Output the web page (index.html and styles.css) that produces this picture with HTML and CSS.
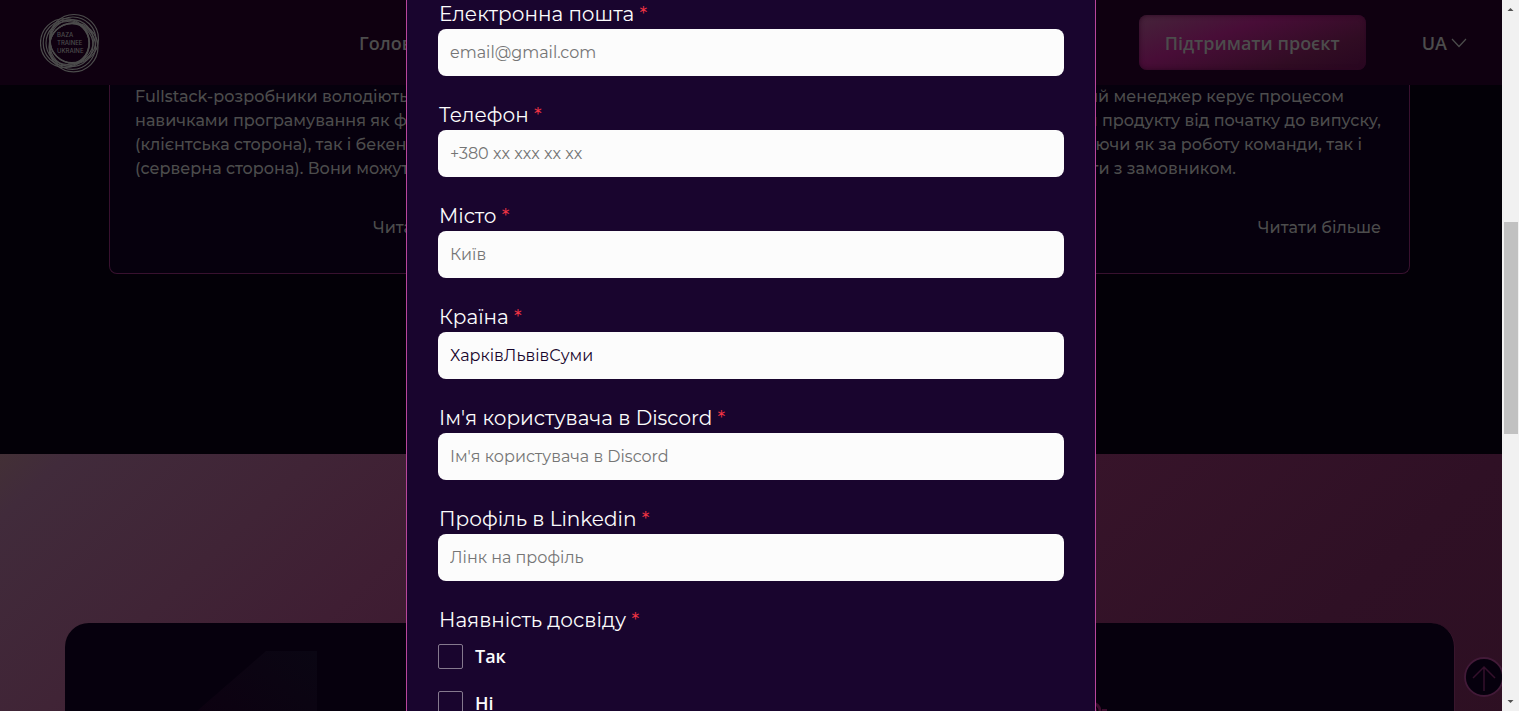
FILE: index.html
```html
<!DOCTYPE html>
<html lang="uk">
<head>
<meta charset="utf-8">
<title>Baza Trainee Ukraine</title>
<link rel="stylesheet" href="styles.css">
</head>
<body>
<div class="page">
  <header class="header">
    <a class="logo" href="#" aria-label="Baza Trainee Ukraine">
      <svg width="60" height="60" viewBox="-30 -30 60 60">
        <g fill="none" stroke="currentColor" stroke-width="1.2">
          <circle r="24.5" cx="-5" cy="0"/><circle r="23" cx="-3.800" cy="0"/><circle r="21.500" cx="-2.500" cy="0"/>
          <circle r="24.5" cx="4" cy="-4"/><circle r="23" cx="3" cy="-3"/><circle r="21.500" cx="1.800" cy="-1.900"/>
          <circle r="24.5" cx="3.500" cy="4.300"/><circle r="23" cx="2.500" cy="3.300"/><circle r="21.500" cx="1.500" cy="2.100"/>
        </g>
        <g class="logo-text"><text x="-13" y="-6">BAZA</text><text x="-13" y="2">TRAINEE</text><text x="-13" y="10">UKRAINE</text></g>
      </svg>
    </a>
    <nav class="nav"><a href="#">Головна</a></nav>
    <button class="support" type="button">Підтримати проєкт</button>
    <button class="lang" type="button">UA
      <svg width="16" height="10" viewBox="0 0 16 10"><path d="M1 1l7 7.500 7-7.500" fill="none" stroke="currentColor" stroke-width="1.200"/></svg>
    </button>
  </header>

  <main>
    <section class="cards">
      <article class="card">
        <p>Fullstack-розробники володіють<br>навичками програмування як фронт<br>(клієнтська сторона), так і бекенд<br>(серверна сторона). Вони можуть</p>
        <a href="#">Читати більше</a>
      </article>
      <article class="card"></article>
      <article class="card">
        <p>Проєктний менеджер керує процесом<br>розробки продукту від початку до випуску,<br>відповідаючи як за роботу команди, так і<br>працювати з замовником.</p>
        <a href="#">Читати більше</a>
      </article>
    </section>

    <section class="steps">
      <div class="panel">
        <svg class="numeral" width="120" height="90" viewBox="0 0 120 90">
          <defs><linearGradient id="num" x1="0" y1="1" x2="1" y2="0"><stop offset="0" stop-color="#0d0010"/><stop offset="1" stop-color="#0a0613"/></linearGradient></defs>
          <path d="M69 0h51v90H0V60z" fill="url(#num)"/>
        </svg>
        <svg class="ring" width="28" height="28" viewBox="0 0 28 28"><g fill="none" stroke="#3d0c2e"><circle cx="10" cy="10" r="8" stroke-width="3"/><circle cx="10" cy="10" r="4" stroke-width="2"/><path d="M21 12v-3h4" stroke-width="2"/></g></svg>
      </div>
    </section>
  </main>

  <button class="to-top" type="button" aria-label="Нагору">
    <svg width="40" height="40" viewBox="0 0 40 40" fill="none"><circle cx="20" cy="20" r="19" fill="#06000d" stroke="#421a38" stroke-width="1.800"/><path d="M20 34V10M9 21l11-11 11 11" stroke="#35102c" stroke-width="1.500"/></svg>
  </button>

  <div class="modal" role="dialog" aria-label="Анкета">
    <form class="form">
      <div class="field"><label for="email">Електронна пошта <span>*</span></label><input id="email" type="email" placeholder="email@gmail.com"></div>
      <div class="field"><label for="phone">Телефон <span>*</span></label><input id="phone" type="tel" placeholder="+380 xx xxx xx xx"></div>
      <div class="field"><label for="city">Місто <span>*</span></label><input id="city" type="text" placeholder="Київ"></div>
      <div class="field"><label for="country">Країна <span>*</span></label><input id="country" type="text" value="ХарківЛьвівСуми"></div>
      <div class="field"><label for="discord">Ім'я користувача в Discord <span>*</span></label><input id="discord" type="text" placeholder="Ім'я користувача в Discord"></div>
      <div class="field"><label for="linkedin">Профіль в Linkedin <span>*</span></label><input id="linkedin" type="url" placeholder="Лінк на профіль"></div>
      <fieldset class="experience">
        <legend>Наявність досвіду <span>*</span></legend>
        <label class="option"><input type="checkbox">Так</label>
        <label class="option"><input type="checkbox">Ні</label>
      </fieldset>
    </form>
  </div>
</div>

<div class="scrollbar" aria-hidden="true">
  <svg width="17" height="17" viewBox="0 0 17 17"><path d="M5.500 11h6L8.500 8z" fill="#505050"/></svg>
  <div class="thumb"></div>
  <svg class="down" width="17" height="17" viewBox="0 0 17 17"><path d="M5.500 6h6L8.500 9z" fill="#505050"/></svg>
</div>
</body>
</html>
```

FILE: styles.css
```css
* { box-sizing: border-box; }

body {
  margin: 0;
  height: 100vh;
  overflow: hidden;
  display: flex;
  background: #030007;
  font-family: Montserrat, Inter, sans-serif;
  font-size: 16px;
  font-weight: 500;
}

a { color: inherit; text-decoration: none; }
button { font: inherit; color: inherit; border: 0; background: none; padding: 0; }

.page {
  position: relative;
  flex: 1;
  min-width: 0;
  display: flex;
  flex-direction: column;
  overflow: hidden;
  color: #4c4c4c;
}

.header {
  flex: none;
  height: 85px;
  padding: 0 35px 0 40px;
  display: flex;
  align-items: center;
  background: #0f0010;
  font: 600 18px/24px "Open Sans", sans-serif;
}
.logo svg { display: block; }
.logo-text { font: 500 6px Inter, sans-serif; fill: currentColor; }
.nav { margin-left: 259px; flex: 1; }
.support {
  height: 55px;
  padding: 0 26px;
  border-radius: 8px;
  background: linear-gradient(160deg, #45243a 0%, #480d37 36%, #300c23 75%, #280620 100%);
  box-shadow: inset 0 0 5px #2b0722;
}
.lang { display: flex; align-items: center; gap: 4px; margin-left: 56px; }

.cards {
  height: 369px;
  padding: 0 92px 0 109px;
  display: grid;
  grid-template-columns: repeat(3, 1fr);
  gap: 24px;
  align-items: start;
}
.card {
  height: 189px;
  padding: 0 28px 33px 25px;
  border: 1px solid #38112f;
  border-top: 0;
  border-radius: 0 0 8px 8px;
  background: #06000d;
  display: flex;
  flex-direction: column;
  justify-content: space-between;
  line-height: 24px;
  white-space: nowrap;
}
.card p { margin: 0; }
.card a { align-self: flex-end; }

.steps {
  height: 720px;
  padding: 169px 47px 0 65px;
  background: linear-gradient(137deg, #433036 0%, #412b3b 3%, #402436 14%, #3f1e33 22%, #3c1930 30%, #37142a 48%, #2f1025 66%, #2d0f22 80%);
}
.panel {
  position: relative;
  height: 540px;
  border-radius: 24px;
  background: #06000d;
  border-right: 1px solid #38152c;
}
.numeral { position: absolute; left: 132px; top: 28px; }
.ring { position: absolute; right: 344px; top: 78px; }

.to-top { position: absolute; right: -2px; bottom: 14px; }
.to-top svg { display: block; }

.modal {
  position: absolute;
  top: 0;
  bottom: 0;
  left: 50%;
  width: 690px;
  transform: translateX(-50%);
  padding: 2px 31px 0;
  overflow: hidden;
  background: #19052e;
  border: solid #b8469c;
  border-width: 0 1px;
  color: #fcfcfc;
}
.form { display: grid; gap: 27px; }
.field { display: grid; gap: 3px; }
.field label, legend { font-size: 20px; font-weight: 400; line-height: 24px; padding: 0 0 0 1px; }
.field span, legend span { color: #f13444; }
.field input {
  width: 100%;
  height: 47px;
  padding: 0 12px;
  border: 0;
  border-radius: 8px;
  background: #fcfcfc;
  color: #18052c;
  font: 400 16px/24px Montserrat, Inter, sans-serif;
}
.field input::placeholder { color: #757575; opacity: 1; }

.experience { margin: 0; padding: 0; border: 0; }
.option {
  display: flex;
  align-items: center;
  gap: 12px;
  height: 24px;
  margin: 12px 0 23px;
  font: 600 18px/24px "Open Sans", sans-serif;
}
.option input {
  appearance: none;
  width: 25px;
  height: 25px;
  margin: 0;
  border: 1px solid #85798e;
  border-radius: 2px;
}

.scrollbar {
  flex: none;
  width: 17px;
  display: flex;
  flex-direction: column;
  background: #f1f1f1;
}
.scrollbar svg { display: block; }
.thumb { height: 212px; margin: 205px 1px 0 2px; background: #c1c1c1; }
.down { margin-top: auto; }
```
